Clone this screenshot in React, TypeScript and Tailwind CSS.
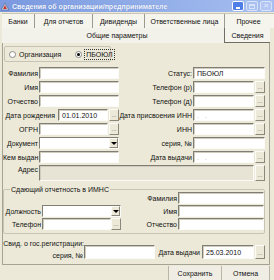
import React from "react";

type Kids = { children?: React.ReactNode };

// sunken XP-classic edit box
function Field({ className = "", text = "", dots = false, disabled = false }: { className?: string; text?: string; dots?: boolean; disabled?: boolean }) {
  return (
    <div
      className={`flex items-center pl-[3px] border border-t-[#7f7d74] border-l-[#7f7d74] border-b-[#fbfbf8] border-r-[#fbfbf8] shadow-[inset_1px_1px_0_#cfccbd] ${
        disabled ? "bg-[#e7e4d6]" : "bg-white"
      } ${className}`}
    >
      {dots ? <span className="text-[#b9b7ae] tracking-[2px]">. .</span> : text}
    </div>
  );
}

function Dots({ className = "h-[12px]" }: { className?: string }) {
  return (
    <div
      className={`w-[10px] shrink-0 flex items-end justify-center pb-[2px] bg-[#ece9d8] border border-t-[#fbfbf8] border-l-[#fbfbf8] border-b-[#8a877c] border-r-[#8a877c] text-[6px] leading-none text-[#555] ${className}`}
    >
      ...
    </div>
  );
}

function Select({ className = "" }: { className?: string }) {
  return (
    <div className={`flex h-[12px] bg-white border border-t-[#7f7d74] border-l-[#7f7d74] border-b-[#fbfbf8] border-r-[#fbfbf8] ${className}`}>
      <div className="flex-1" />
      <div className="w-[9px] flex items-center justify-center bg-[#ece9d8] border border-t-[#fbfbf8] border-l-[#fbfbf8] border-b-[#8a877c] border-r-[#8a877c]">
        <div className="w-0 h-0 border-l-[3px] border-r-[3px] border-t-[3px] border-l-transparent border-r-transparent border-t-black" />
      </div>
    </div>
  );
}

function Label({ children, className = "" }: Kids & { className?: string }) {
  return <span className={`whitespace-nowrap pr-[1px] ${className}`}>{children}</span>;
}

function Row({ left, right, className = "h-[12px]" }: { left?: React.ReactNode; right?: React.ReactNode; className?: string }) {
  return (
    <div className={`flex ${className}`}>
      <div className="w-[116px] flex justify-end items-center">{left}</div>
      <div className="flex-1 flex justify-end items-center">{right}</div>
    </div>
  );
}

function Radio({ checked, label }: { checked?: boolean; label: string }) {
  return (
    <div className="flex items-center gap-[3px]">
      <div className="w-[7px] h-[7px] rounded-full bg-white border border-[#8a8a8a] flex items-center justify-center">
        {checked && <div className="w-[3px] h-[3px] rounded-full bg-black" />}
      </div>
      <span className={checked ? "outline outline-1 outline-dotted outline-[#333] px-[1px] py-[1px]" : ""}>{label}</span>
    </div>
  );
}

function Tab({ children, className = "" }: Kids & { className?: string }) {
  return (
    <div className={`flex items-center justify-center h-full whitespace-nowrap ${className}`}>{children}</div>
  );
}

export default function App() {
  return (
    <div className="w-[274px] h-[280px] overflow-hidden bg-[#ece9d8] text-[#111] text-[7px] leading-none font-['Liberation_Sans',Arial,sans-serif]">
      {/* title bar */}
      <div className="h-[12px] flex items-center bg-gradient-to-r from-[#7a99df] to-[#a6bff0] pl-[1px] pr-[2px]">
        <svg width="9" height="9" viewBox="0 0 9 9" className="shrink-0">
          <path d="M0 8 L4 1 L8 8 Z" fill="#c8d4f0" stroke="#4a5a8a" strokeWidth="0.6" />
          <path d="M2 7 L4 3 L6 7 Z" fill="#c83c2c" />
        </svg>
        <span className="ml-[2px] font-bold text-[7px] text-[#f4f7ff] whitespace-nowrap [text-shadow:0_0_1px_#5a78c0]">
          Сведения об организации/предпринимателе
        </span>
        <div className="flex-1" />
        <div className="flex gap-[2px]">
          <div className="w-[12px] h-[10px] rounded-[2px] bg-[#4f7fe6] border border-white flex items-end justify-center pb-[1px]">
            <div className="w-[4px] h-[2px] bg-white" />
          </div>
          <div className="w-[12px] h-[10px] rounded-[2px] bg-[#a9c0f0] border border-[#d8e3fa] flex items-center justify-center">
            <div className="w-[6px] h-[5px] border border-[#d8e3fa] border-t-2" />
          </div>
          <div className="w-[12px] h-[10px] rounded-[2px] bg-[#b3c7f2] border border-[#d8e3fa] flex items-center justify-center text-[#dbe5fa] text-[8px] font-bold">
            ×
          </div>
        </div>
      </div>

      {/* tabs */}
      <div className="mt-[1px] ml-[2px] flex h-[15px] bg-[#f5f4ed] border-t border-[#c9c6b8]">
        <Tab className="w-[33px] border-r border-[#9c9a8f]">Банки</Tab>
        <Tab className="w-[58px] border-r border-[#9c9a8f]">Для отчетов</Tab>
        <Tab className="w-[52px] border-r border-[#9c9a8f]">Дивиденды</Tab>
        <Tab className="w-[80px] border-r border-[#9c9a8f]">Ответственные лица</Tab>
        <Tab className="w-[47px]">Прочее</Tab>
      </div>
      <div className="ml-[2px] flex h-[15px]">
        <Tab className="w-[222px] bg-[#f3f2ea] pl-[8px]">Общие параметры</Tab>
        <Tab className="w-[46px] bg-[#f5f4ed] border-l border-b border-[#6f6d64]">Сведения</Tab>
      </div>

      {/* page */}
      <div className="ml-[2px] w-[268px] h-[222px] border-l border-r border-b border-[#a5a296] bg-[#ece9d8] pr-[4px] flex flex-col">
        <div className="ml-[1px] mt-[3px] w-[107px] h-[16px] border border-[#c7c4b6] rounded-[2px] flex items-center gap-[14px] pl-[4px]">
          <Radio label="Организация" />
          <Radio checked label="ПБОЮЛ" />
        </div>

        <div className="mt-[5px] flex flex-col gap-[2px]">
          <Row
            left={<><Label>Фамилия</Label><Field className="w-[80px] h-[12px]" /></>}
            right={<><Label>Статус:</Label><Field className="w-[72px] h-[12px]" text="ПБОЮЛ" /></>}
          />
          <Row
            left={<><Label>Имя</Label><Field className="w-[80px] h-[12px]" /></>}
            right={<><Label>Телефон (р)</Label><Field className="w-[61px] h-[12px]" /><div className="w-[1px]" /><Dots /></>}
          />
          <Row
            left={<><Label>Отчество</Label><Field className="w-[80px] h-[12px]" /></>}
            right={<><Label>Телефон (д)</Label><Field className="w-[61px] h-[12px]" /><div className="w-[1px]" /><Dots /></>}
          />
          <Row
            left={<><Label className="pr-[3px]">Дата рождения</Label><Field className="w-[50px] h-[12px]" text="01.01.2010" /><div className="w-[1px]" /><Dots /></>}
            right={<><Label>Дата присвоения ИНН</Label><Field className="w-[61px] h-[12px]" dots /><div className="w-[1px]" /><Dots /></>}
          />
          <Row
            left={<><Label>ОГРН</Label><Field className="w-[69px] h-[12px]" /><div className="w-[1px]" /><Dots /></>}
            right={<><Label>ИНН</Label><Field className="w-[61px] h-[12px]" /><div className="w-[1px]" /><Dots /></>}
          />
          <Row
            left={<><Label>Документ</Label><Select className="w-[80px]" /></>}
            right={<><Label>серия, №</Label><Field className="w-[72px] h-[12px]" /></>}
          />
          <Row
            left={<><Label>Кем выдан</Label><Field className="w-[80px] h-[12px]" /></>}
            right={<><Label>Дата выдачи</Label><Field className="w-[61px] h-[12px]" dots /><div className="w-[1px]" /><Dots /></>}
          />
          <div className="flex h-[16px]">
            <div className="w-[36px] flex justify-end items-start pt-[1px]">
              <Label>Адрес</Label>
            </div>
            <Field className="flex-1 h-[16px]" disabled />
            <div className="w-[1px]" />
            <Dots className="h-[16px]" />
          </div>
        </div>

        {/* group */}
        <div className="relative mt-[8px] h-[45px] border border-[#c7c4b6] rounded-[2px] pt-[2px] flex flex-col gap-[1px]">
          <span className="absolute left-[6px] top-[-4px] bg-[#ece9d8] px-[1px]">Сдающий отчетность в ИМНС</span>
          <div className="flex h-[12px] items-center justify-end">
            <Label>Фамилия</Label>
            <Field className="w-[86px] h-[12px]" />
          </div>
          <div className="flex h-[12px] items-center">
            <div className="flex items-center w-[117px] justify-end">
              <Label>Должность</Label>
              <Select className="w-[79px]" />
            </div>
            <div className="flex-1 flex justify-end items-center">
              <Label>Имя</Label>
              <Field className="w-[86px] h-[12px]" />
            </div>
          </div>
          <div className="flex h-[12px] items-center">
            <div className="flex items-center w-[117px] justify-end">
              <Label>Телефон</Label>
              <Field className="w-[69px] h-[12px]" />
              <Dots />
            </div>
            <div className="flex-1 flex justify-end items-center">
              <Label>Отчество</Label>
              <Field className="w-[86px] h-[12px]" />
            </div>
          </div>
        </div>

        {/* registration */}
        <div className="mt-[5px] flex items-center">
          <div className="w-[81px] flex flex-col items-end gap-[3px] leading-[9px]">
            <span className="whitespace-nowrap">Свид. о гос.регистрации:</span>
            <span className="whitespace-nowrap pr-[1px]">серия, №</span>
          </div>
          <Field className="w-[71px] h-[14px] mt-[5px]" />
          <div className="flex-1 flex justify-end items-center mt-[5px]">
            <Label className="pr-[2px]">Дата выдачи</Label>
            <Field className="w-[52px] h-[14px]" text="25.03.2010" />
            <div className="w-[1px]" />
            <Dots className="h-[14px]" />
          </div>
        </div>
      </div>

      {/* bottom buttons */}
      <div className="flex justify-end mt-[1px] pr-[4px] h-[15px]">
        <div className="w-[54px] flex items-center justify-center border-l border-r border-[#b9b6a8] bg-[#efede4]">Сохранить</div>
        <div className="w-[48px] flex items-center justify-center border-r border-[#b9b6a8] bg-[#efede4]">Отмена</div>
      </div>
    </div>
  );
}
